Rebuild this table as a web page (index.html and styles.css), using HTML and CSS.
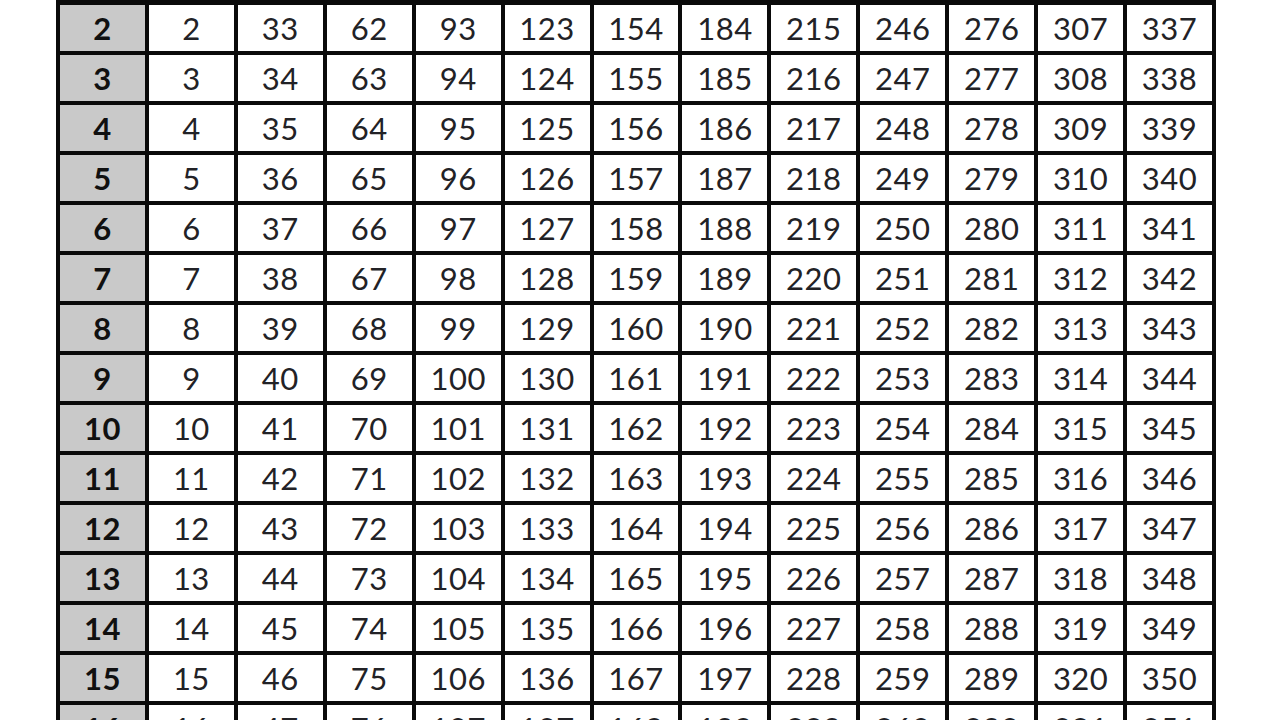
FILE: index.html
```html
<!DOCTYPE html>
<html>
<head>
<meta charset="utf-8">
<link rel="stylesheet" href="styles.css">
</head>
<body>
<div class="sheet">
<div class="grid">
<div class="day">2</div><div class="c">2</div><div class="c">33</div><div class="c">62</div><div class="c">93</div><div class="c">123</div><div class="c">154</div><div class="c">184</div><div class="c">215</div><div class="c">246</div><div class="c">276</div><div class="c">307</div><div class="c">337</div>
<div class="day">3</div><div class="c">3</div><div class="c">34</div><div class="c">63</div><div class="c">94</div><div class="c">124</div><div class="c">155</div><div class="c">185</div><div class="c">216</div><div class="c">247</div><div class="c">277</div><div class="c">308</div><div class="c">338</div>
<div class="day">4</div><div class="c">4</div><div class="c">35</div><div class="c">64</div><div class="c">95</div><div class="c">125</div><div class="c">156</div><div class="c">186</div><div class="c">217</div><div class="c">248</div><div class="c">278</div><div class="c">309</div><div class="c">339</div>
<div class="day">5</div><div class="c">5</div><div class="c">36</div><div class="c">65</div><div class="c">96</div><div class="c">126</div><div class="c">157</div><div class="c">187</div><div class="c">218</div><div class="c">249</div><div class="c">279</div><div class="c">310</div><div class="c">340</div>
<div class="day">6</div><div class="c">6</div><div class="c">37</div><div class="c">66</div><div class="c">97</div><div class="c">127</div><div class="c">158</div><div class="c">188</div><div class="c">219</div><div class="c">250</div><div class="c">280</div><div class="c">311</div><div class="c">341</div>
<div class="day">7</div><div class="c">7</div><div class="c">38</div><div class="c">67</div><div class="c">98</div><div class="c">128</div><div class="c">159</div><div class="c">189</div><div class="c">220</div><div class="c">251</div><div class="c">281</div><div class="c">312</div><div class="c">342</div>
<div class="day">8</div><div class="c">8</div><div class="c">39</div><div class="c">68</div><div class="c">99</div><div class="c">129</div><div class="c">160</div><div class="c">190</div><div class="c">221</div><div class="c">252</div><div class="c">282</div><div class="c">313</div><div class="c">343</div>
<div class="day">9</div><div class="c">9</div><div class="c">40</div><div class="c">69</div><div class="c">100</div><div class="c">130</div><div class="c">161</div><div class="c">191</div><div class="c">222</div><div class="c">253</div><div class="c">283</div><div class="c">314</div><div class="c">344</div>
<div class="day">10</div><div class="c">10</div><div class="c">41</div><div class="c">70</div><div class="c">101</div><div class="c">131</div><div class="c">162</div><div class="c">192</div><div class="c">223</div><div class="c">254</div><div class="c">284</div><div class="c">315</div><div class="c">345</div>
<div class="day">11</div><div class="c">11</div><div class="c">42</div><div class="c">71</div><div class="c">102</div><div class="c">132</div><div class="c">163</div><div class="c">193</div><div class="c">224</div><div class="c">255</div><div class="c">285</div><div class="c">316</div><div class="c">346</div>
<div class="day">12</div><div class="c">12</div><div class="c">43</div><div class="c">72</div><div class="c">103</div><div class="c">133</div><div class="c">164</div><div class="c">194</div><div class="c">225</div><div class="c">256</div><div class="c">286</div><div class="c">317</div><div class="c">347</div>
<div class="day">13</div><div class="c">13</div><div class="c">44</div><div class="c">73</div><div class="c">104</div><div class="c">134</div><div class="c">165</div><div class="c">195</div><div class="c">226</div><div class="c">257</div><div class="c">287</div><div class="c">318</div><div class="c">348</div>
<div class="day">14</div><div class="c">14</div><div class="c">45</div><div class="c">74</div><div class="c">105</div><div class="c">135</div><div class="c">166</div><div class="c">196</div><div class="c">227</div><div class="c">258</div><div class="c">288</div><div class="c">319</div><div class="c">349</div>
<div class="day">15</div><div class="c">15</div><div class="c">46</div><div class="c">75</div><div class="c">106</div><div class="c">136</div><div class="c">167</div><div class="c">197</div><div class="c">228</div><div class="c">259</div><div class="c">289</div><div class="c">320</div><div class="c">350</div>
<div class="day">16</div><div class="c">16</div><div class="c">47</div><div class="c">76</div><div class="c">107</div><div class="c">137</div><div class="c">168</div><div class="c">198</div><div class="c">229</div><div class="c">260</div><div class="c">290</div><div class="c">321</div><div class="c">351</div>
</div>
</div>
</body>
</html>
```

FILE: styles.css
```css
html, body {
  margin: 0;
  padding: 0;
  background: #ffffff;
  overflow: hidden;
  height: 720px;
}
.sheet {
  padding-left: 56px;
}
.grid {
  width: 1160px;
  box-sizing: border-box;
  display: grid;
  grid-template-columns: repeat(13, 1fr);
  grid-auto-rows: 46px;
  gap: 4px;
  padding: 5px 4px 4px 4px;
  background: #0a0a0a;
}
.grid > div {
  display: flex;
  align-items: center;
  justify-content: center;
  font-family: Lato, "Open Sans", sans-serif;
  font-size: 31px;
  letter-spacing: 0.5px;
  color: #222226;
  background: #ffffff;
}
.grid > .day {
  background: #c9c9c9;
  font-weight: 700;
  color: #101010;
}
```
